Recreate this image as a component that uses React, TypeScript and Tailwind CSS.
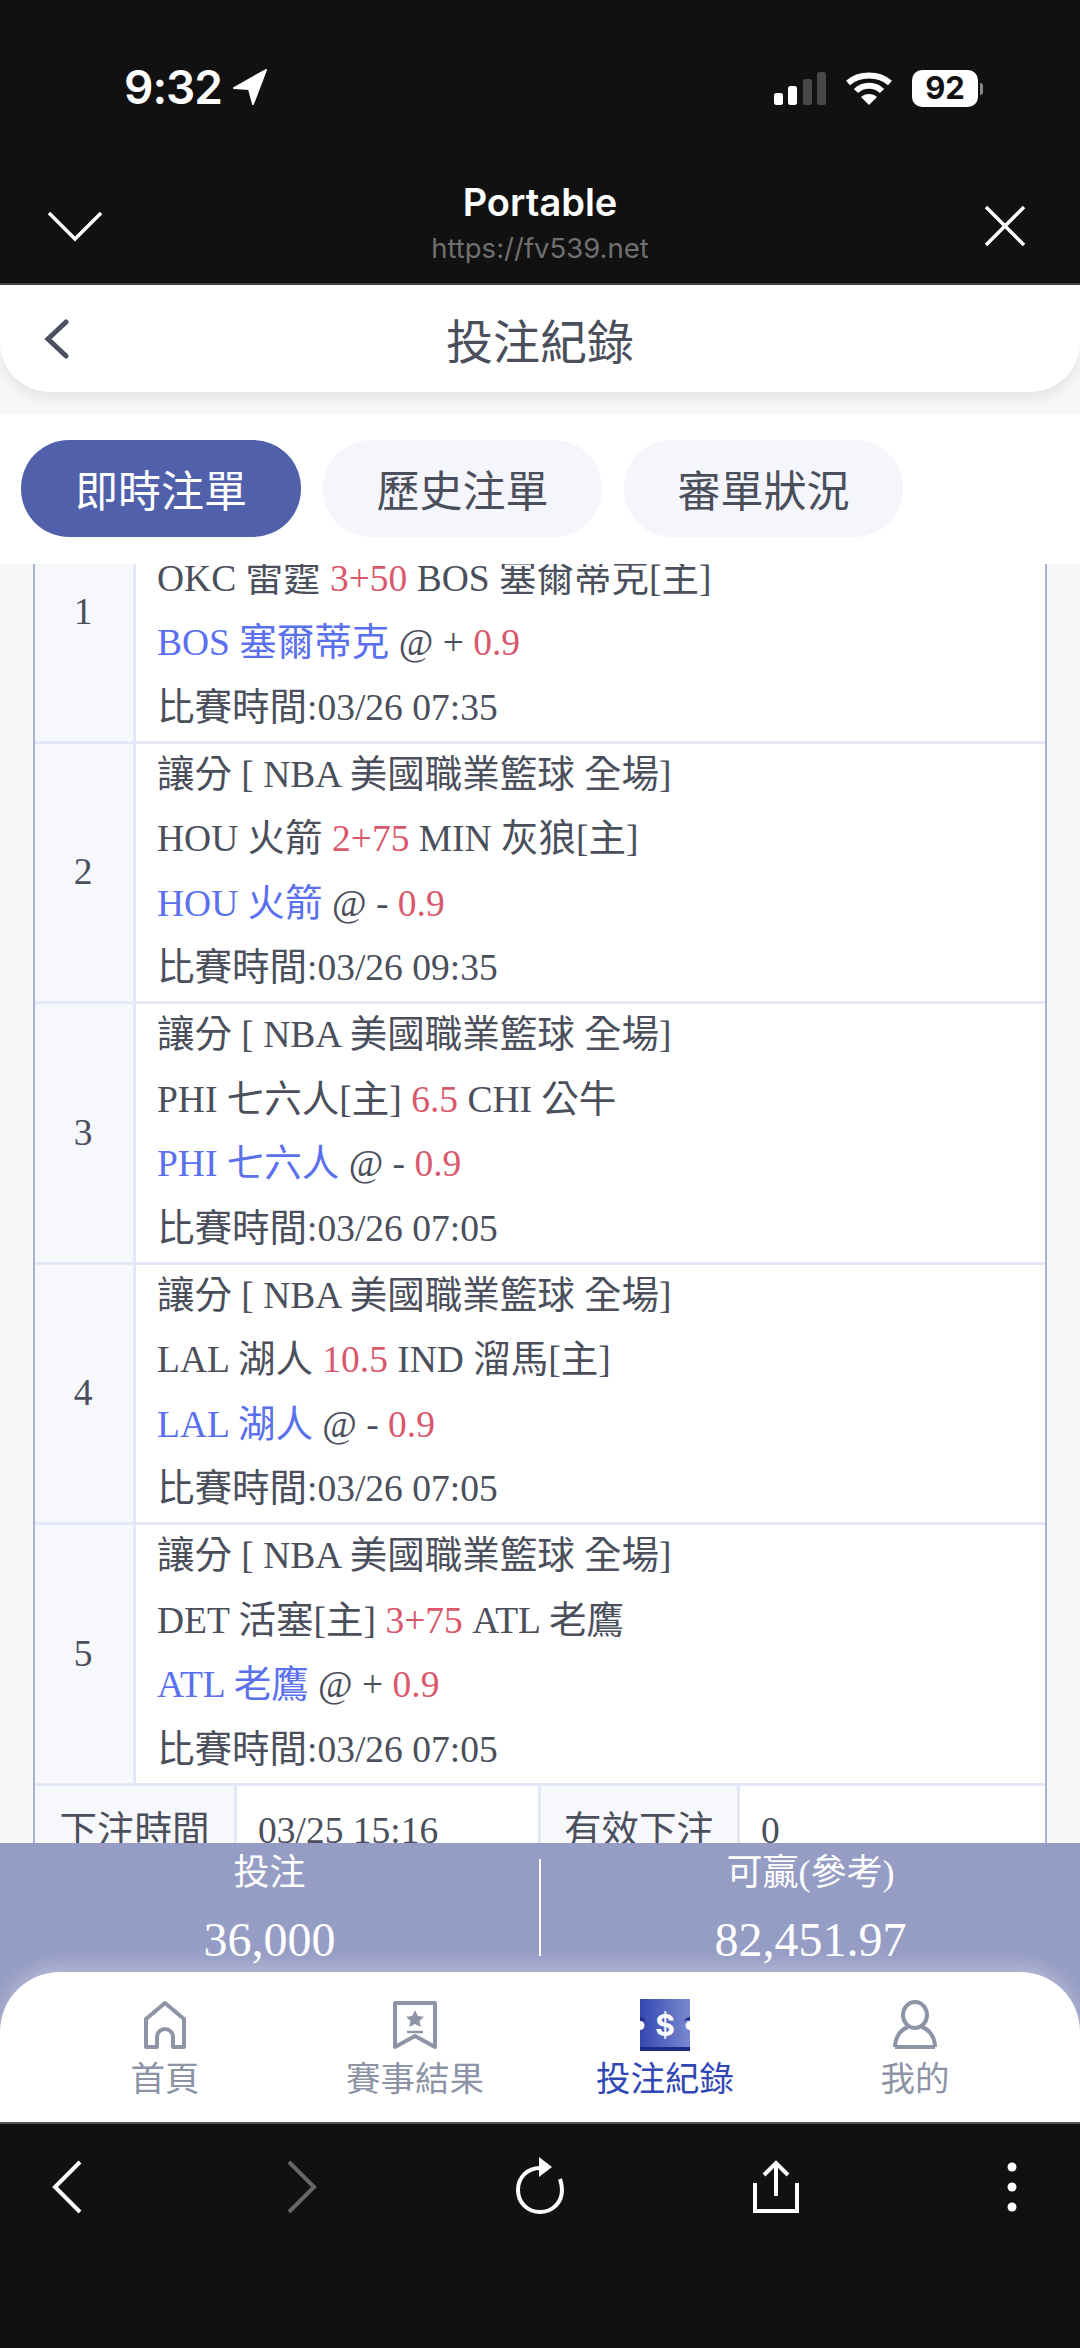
const serif = "font-['Liberation_Serif','Noto_Sans_CJK_TC',serif]";

const bets = [
  { home: 'OKC 雷霆 ', line: '3+50', away: ' BOS 塞爾蒂克[主]', pick: 'BOS 塞爾蒂克', sign: '+', time: '03/26 07:35' },
  { home: 'HOU 火箭 ', line: '2+75', away: ' MIN 灰狼[主]', pick: 'HOU 火箭', sign: '-', time: '03/26 09:35' },
  { home: 'PHI 七六人[主] ', line: '6.5', away: ' CHI 公牛', pick: 'PHI 七六人', sign: '-', time: '03/26 07:05' },
  { home: 'LAL 湖人 ', line: '10.5', away: ' IND 溜馬[主]', pick: 'LAL 湖人', sign: '-', time: '03/26 07:05' },
  { home: 'DET 活塞[主] ', line: '3+75', away: ' ATL 老鷹', pick: 'ATL 老鷹', sign: '+', time: '03/26 07:05' },
];

function StatusBar() {
  return (
    <div className="flex h-[140px] items-start justify-between pt-[62px] pl-[124px] pr-[97px]">
      <div className="flex items-center gap-[10px]">
        <span className="font-['Inter',sans-serif] text-[46px] leading-[50px] font-semibold tracking-[-1px] text-white">9:32</span>
        <svg width="36" height="36" viewBox="0 0 36 36" fill="#fff" stroke="#fff" strokeWidth="2" strokeLinejoin="round"><path d="M34 1 L2 19 L17 20 L21 35 Z" /></svg>
      </div>
      <div className="flex items-center gap-[20px] pt-[8px]">
        <svg width="52" height="34" viewBox="0 0 52 34">
          <rect x="0" y="21" width="9" height="12" rx="2.5" fill="#fff" />
          <rect x="14" y="14" width="9" height="19" rx="2.5" fill="#fff" />
          <rect x="29" y="7" width="9" height="26" rx="2.5" fill="#484848" />
          <rect x="43" y="0" width="9" height="33" rx="2.5" fill="#484848" />
        </svg>
        <svg width="46" height="34" viewBox="0 0 46 34" fill="none" stroke="#fff" strokeWidth="6">
          <path d="M2 11 C13 1 33 1 44 11" />
          <path d="M10 19 C17 12 29 12 36 19" />
          <path d="M23 33 L15 25 C19 21 27 21 31 25 Z" fill="#fff" stroke="none" />
        </svg>
        <div className="flex items-center">
          <div className="flex h-[37px] w-[66px] items-center justify-center rounded-[10px] bg-white font-['Inter',sans-serif] text-[31px] font-bold text-[#111]">92</div>
          <div className="ml-[2px] h-[12px] w-[3px] rounded-r-full bg-[#888]" />
        </div>
      </div>
    </div>
  );
}

function BrowserTitle() {
  return (
    <div className="relative flex h-[145px] flex-col items-center border-b-[2px] border-[#444] pt-[40px] font-['Inter',sans-serif]">
      <span className="text-[38px] leading-[44px] font-semibold text-white">Portable</span>
      <span className="mt-[7px] text-[27.5px] leading-[34px] text-[#707070]">https://fv539.net</span>
      <svg className="absolute top-[70px] left-[47px]" width="56" height="32" viewBox="0 0 56 32" fill="none" stroke="#fff" strokeWidth="3.5">
        <path d="M2 3 L28 29 L54 3" />
      </svg>
      <svg className="absolute top-[65px] left-[984px]" width="42" height="42" viewBox="0 0 42 42" fill="none" stroke="#fff" strokeWidth="3.5">
        <path d="M2 2 L40 40 M40 2 L2 40" />
      </svg>
    </div>
  );
}

function BetRow({ n, bet }: { n: number; bet: (typeof bets)[number] }) {
  return (
    <div className="flex h-[260.6px] border-b-[3px] border-[#e4e7f5]">
      <div className="flex w-[101px] shrink-0 items-center justify-center border-r-[3px] border-[#e4e7f5] bg-[#f7f8fc] pr-[2px]">{n}</div>
      <div className="-mt-[1px] flex-1 pl-[21px] [&>div]:h-[64.5px] [&>div]:leading-[64.5px] [&>div]:whitespace-pre">
        <div>讓分 [ NBA 美國職業籃球 全場]</div>
        <div>
          {bet.home}
          <span className="text-[#d9586c]">{bet.line}</span>
          {bet.away}
        </div>
        <div>
          <span className="text-[#5a70ee]">{bet.pick}</span> @ {bet.sign} <span className="text-[#d9586c]">0.9</span>
        </div>
        <div>比賽時間:{bet.time}</div>
      </div>
    </div>
  );
}

function NavItem({ label, active, children }: { label: string; active?: boolean; children: React.ReactNode }) {
  return (
    <div className="flex flex-col items-center">
      <div className="flex h-[56px] items-center justify-center">{children}</div>
      <span className={`mt-[3px] text-[34.5px] leading-[40px] ${active ? 'text-[#3047b4]' : 'text-[#8c94a6]'}`}>{label}</span>
    </div>
  );
}

export default function App() {
  return (
    <div className="flex h-[2348px] w-[1080px] flex-col overflow-hidden bg-[#f7f7f7] font-['Noto_Sans_CJK_TC',sans-serif]">
      <div className="bg-[#111]">
        <StatusBar />
        <BrowserTitle />
      </div>

      <div className="relative z-10 flex h-[107px] shrink-0 items-center justify-center rounded-b-[50px] bg-white shadow-[0_6px_14px_rgba(0,0,0,0.08)]">
        <svg className="absolute top-[34px] left-[44px]" width="26" height="40" viewBox="0 0 26 40" fill="none" stroke="#4b5060" strokeWidth="5" strokeLinecap="round">
          <path d="M22 3 L4 20 L22 37" />
        </svg>
        <span className="text-[47px] leading-none text-[#4b4f5c]">投注紀錄</span>
      </div>

      <div className="relative z-10 mt-[22px] flex h-[150px] shrink-0 items-center gap-[22px] bg-white pb-[1px] pl-[21px]">
        <div className="flex h-[97px] w-[280px] items-center justify-center rounded-[48px] bg-[#5160ab] text-[43px] text-white">即時注單</div>
        <div className="flex h-[97px] w-[279px] items-center justify-center rounded-[48px] bg-[#f5f6fb] text-[43px] text-[#4b4f5c]">歷史注單</div>
        <div className="flex h-[97px] w-[279px] items-center justify-center rounded-[48px] bg-[#f5f6fb] text-[43px] text-[#4b4f5c]">審單狀況</div>
      </div>

      <div className={`min-h-0 flex-1 overflow-hidden px-[33px] text-[37.5px] text-[#4b4f5c] ${serif}`}>
        <div className="-mt-[81px] border-x-[2px] border-[#a9b3d6] bg-white">
          {bets.map((bet, i) => (
            <BetRow key={i} n={i + 1} bet={bet} />
          ))}
          <div className="flex h-[90px]">
            <div className="flex w-[202px] items-center justify-center border-r-[3px] border-[#e4e7f5] bg-[#f7f8fc]">下注時間</div>
            <div className="flex w-[304px] items-center border-r-[3px] border-[#e4e7f5] pl-[21px]">03/25 15:16</div>
            <div className="flex w-[199px] items-center justify-center border-r-[3px] border-[#e4e7f5] bg-[#f7f8fc]">有效下注</div>
            <div className="flex flex-1 items-center pl-[21px]">0</div>
          </div>
        </div>
      </div>

      <div className="h-[279px] shrink-0 bg-[#969dc4]">
        <div className={`flex h-[129px] text-white ${serif}`}>
          <div className="flex flex-1 flex-col items-center pt-[5px]">
            <span className="text-[36px] leading-[50px]">投注</span>
            <span className="mt-[14px] text-[48px] leading-[56px]">36,000</span>
          </div>
          <div className="mt-[16px] h-[97px] w-[2px] bg-white" />
          <div className="flex flex-1 flex-col items-center pt-[5px]">
            <span className="text-[36px] leading-[50px]">可贏(參考)</span>
            <span className="mt-[14px] text-[48px] leading-[56px]">82,451.97</span>
          </div>
        </div>
        <div className="grid h-[150px] grid-cols-4 rounded-t-[60px] bg-white px-[40px] pt-[25px] shadow-[0_-8px_16px_rgba(255,255,255,0.25)]">
          <NavItem label="首頁">
            <svg width="44" height="50" viewBox="0 0 44 50" fill="none" stroke="#8c94a6" strokeWidth="4" strokeLinejoin="round">
              <path d="M22 3 L41 19 V47 H30 V37 A8 8 0 0 0 14 37 V47 H3 V19 Z" />
            </svg>
          </NavItem>
          <NavItem label="賽事結果">
            <svg width="46" height="50" viewBox="0 0 46 50" fill="none" stroke="#8c94a6" strokeWidth="4" strokeLinejoin="round">
              <path d="M3 3 H43 V47 L23 36 L3 47 Z" />
              <path d="M23 10 L25.8 16 L32 16.8 L27.5 21 L28.7 27 L23 24 L17.3 27 L18.5 21 L14 16.8 L20.2 16 Z" fill="#8c94a6" stroke="none" />
              <path d="M15 32 H31" strokeWidth="2.5" />
            </svg>
          </NavItem>
          <NavItem active label="投注紀錄">
            <svg width="50" height="52" viewBox="0 0 50 52">
              <defs>
                <linearGradient id="ticket" x1="0" y1="0" x2="1" y2="0">
                  <stop offset="0" stopColor="#3447b0" />
                  <stop offset="1" stopColor="#7a8ad0" />
                </linearGradient>
              </defs>
              <path d="M0 0 H50 V22 A4.5 4.5 0 0 0 50 31 V52 H0 V31 A4.5 4.5 0 0 0 0 22 Z" fill="url(#ticket)" />
              <path d="M0 18 A7 7 0 0 1 6 23 A4.5 4.5 0 0 0 0 22 Z M50 18 A7 7 0 0 0 44 23 A4.5 4.5 0 0 1 50 22 Z" fill="#1e2a85" />
              <rect x="0" y="48" width="50" height="4" fill="#1e2a85" />
              <text x="25" y="37" textAnchor="middle" fontFamily="Inter, sans-serif" fontWeight="700" fontSize="30" fill="#fff">$</text>
            </svg>
          </NavItem>
          <NavItem label="我的">
            <svg width="46" height="50" viewBox="0 0 46 50" fill="none" stroke="#8c94a6" strokeWidth="4" strokeLinejoin="round">
              <ellipse cx="23" cy="15" rx="12" ry="13" />
              <path d="M3 47 C3 36 10 29 16 27 M43 47 C43 36 36 29 30 27 M3 47 H43" />
            </svg>
          </NavItem>
        </div>
      </div>

      <div className="h-[226px] shrink-0 border-t-[2px] border-[#555] bg-[#111]">
        <div className="flex h-[96px] items-center pt-[30px] pl-[50px]">
          <svg className="shrink-0" width="34" height="54" viewBox="0 0 34 54" fill="none" stroke="#fff" strokeWidth="4">
            <path d="M30 2 L5 27 L30 52" />
          </svg>
          <svg className="ml-[201px] shrink-0" width="34" height="54" viewBox="0 0 34 54" fill="none" stroke="#666" strokeWidth="4">
            <path d="M4 2 L29 27 L4 52" />
          </svg>
          <svg className="-mt-[3px] ml-[196px] shrink-0" width="50" height="58" viewBox="0 0 50 58" fill="none" stroke="#fff" strokeWidth="4">
            <path d="M27 11 C12 10 3 21 3 33 C3 46 13 55 25 55 C37 55 47 46 47 33 C47 28 46 25 45 22" />
            <path d="M24 0 L37 10 L24 20 Z" fill="#fff" stroke="none" />
          </svg>
          <svg className="ml-[187px] shrink-0" width="48" height="54" viewBox="0 0 48 54" fill="none" stroke="#fff" strokeWidth="4">
            <path d="M24 36 V3 M12 15 L24 3 L36 15" />
            <path d="M3 23 V51 H45 V23" />
          </svg>
          <svg className="ml-[207px] shrink-0" width="10" height="50" viewBox="0 0 10 50" fill="#fff">
            <circle cx="5" cy="5" r="4.5" />
            <circle cx="5" cy="25" r="4.5" />
            <circle cx="5" cy="45" r="4.5" />
          </svg>
        </div>
      </div>
    </div>
  );
}
